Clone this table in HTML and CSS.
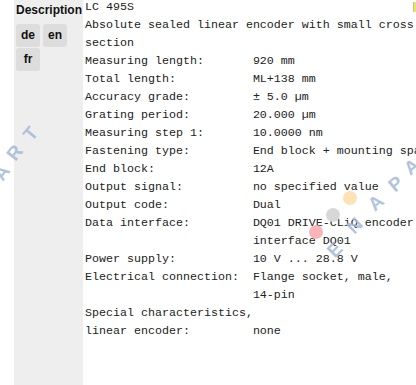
FILE: index.html
```html
<!DOCTYPE html>
<html lang="en">
<head>
<meta charset="utf-8">
<title>LC 495S</title>
<link rel="stylesheet" href="styles.css">
</head>
<body>
<div class="page">
  <aside class="side">
    <div class="side-title">Description</div>
    <div class="langs">
      <span class="lang">de</span>
      <span class="lang">en</span>
      <span class="lang">fr</span>
    </div>
  </aside>
  <pre class="spec">LC 495S
Absolute sealed linear encoder with small cross
section
Measuring length:       920 mm
Total length:           ML+138 mm
Accuracy grade:         ± 5.0 µm
Grating period:         20.000 µm
Measuring step 1:       10.0000 nm
Fastening type:         End block + mounting spar
End block:              12A
Output signal:          no specified value
Output code:            Dual
Data interface:         DQ01 DRIVE-CLiQ encoder
                        interface DQ01
Power supply:           10 V ... 28.8 V
Electrical connection:  Flange socket, male,
                        14-pin
Special characteristics,
linear encoder:         none</pre>
</div>
<div class="watermark" aria-hidden="true">
  <span class="wm wm-l1">A</span>
  <span class="wm wm-l2">R</span>
  <span class="wm wm-l3">T</span>
  <span class="wm wm-r1">E</span>
  <span class="wm wm-r2">N</span>
  <span class="wm wm-r3">A</span>
  <span class="wm wm-r4">P</span>
  <span class="wm wm-r5">A</span>
  <span class="dot dot-orange"></span>
  <span class="dot dot-gray"></span>
  <span class="dot dot-pink"></span>
</div>
<div class="edge-tag"></div>
</body>
</html>
```
FILE: styles.css
```css
html, body {
  margin: 0;
  padding: 0;
  height: 100%;
  overflow: hidden;
  background: #ffffff;
}

.page {
  display: flex;
  align-items: stretch;
  height: 100%;
}

.side {
  flex: 0 0 auto;
  width: 65px;
  margin-left: 14px;
  padding: 3px 2px 0 2px;
  background: #eeeeee;
  font-family: "Liberation Sans", Arial, sans-serif;
  font-size: 12px;
  font-weight: bold;
  color: #111111;
}

.side-title {
  line-height: 14px;
  height: 14px;
  white-space: nowrap;
}

.langs {
  display: flex;
  flex-wrap: wrap;
  gap: 1px 3px;
  margin-top: 6.5px;
}

.lang {
  display: flex;
  align-items: center;
  justify-content: center;
  width: 24px;
  height: 23px;
  background: #dddddd;
  border-radius: 3px;
  line-height: 1;
}

.spec {
  margin: -2px 0 0 2px;
  font-family: "Liberation Mono", "Courier New", monospace;
  font-size: 11.67px;
  line-height: 18px;
  color: #222222;
  white-space: pre;
}

.watermark {
  position: absolute;
  inset: 0;
  pointer-events: none;
}

.wm {
  position: absolute;
  width: 20px;
  height: 20px;
  margin: -10px 0 0 -10px;
  display: flex;
  align-items: center;
  justify-content: center;
  font-family: "Liberation Sans", Arial, sans-serif;
  font-size: 19px;
  font-weight: bold;
  color: rgba(168, 188, 214, 0.9);
}

.wm-l1 { left: 2px;  top: 173px; transform: rotate(-54deg); }
.wm-l2 { left: 15px; top: 153px; transform: rotate(-52deg); }
.wm-l3 { left: 31px; top: 134px; transform: rotate(-50deg); }

.wm-r1 { left: 335px; top: 250px; transform: rotate(-46deg); }
.wm-r2 { left: 355px; top: 226px; transform: rotate(-44deg); }
.wm-r3 { left: 376px; top: 203px; transform: rotate(-42deg); }
.wm-r4 { left: 396px; top: 184px; transform: rotate(-40deg); }
.wm-r5 { left: 412px; top: 167px; transform: rotate(-38deg); }

.dot {
  position: absolute;
  width: 14px;
  height: 14px;
  margin: -7px 0 0 -7px;
  border-radius: 50%;
}

.dot-orange { left: 350px; top: 198px; background: #fde2b6; }
.dot-gray   { left: 333px; top: 215px; background: #d7d7d7; }
.dot-pink   { left: 316px; top: 232px; background: #fbb5b9; }

.edge-tag {
  position: absolute;
  left: 413px;
  top: 2px;
  width: 3px;
  height: 10px;
  background: #ece46a;
  border-left: 1px solid #c8c28a;
  box-sizing: border-box;
}
```
